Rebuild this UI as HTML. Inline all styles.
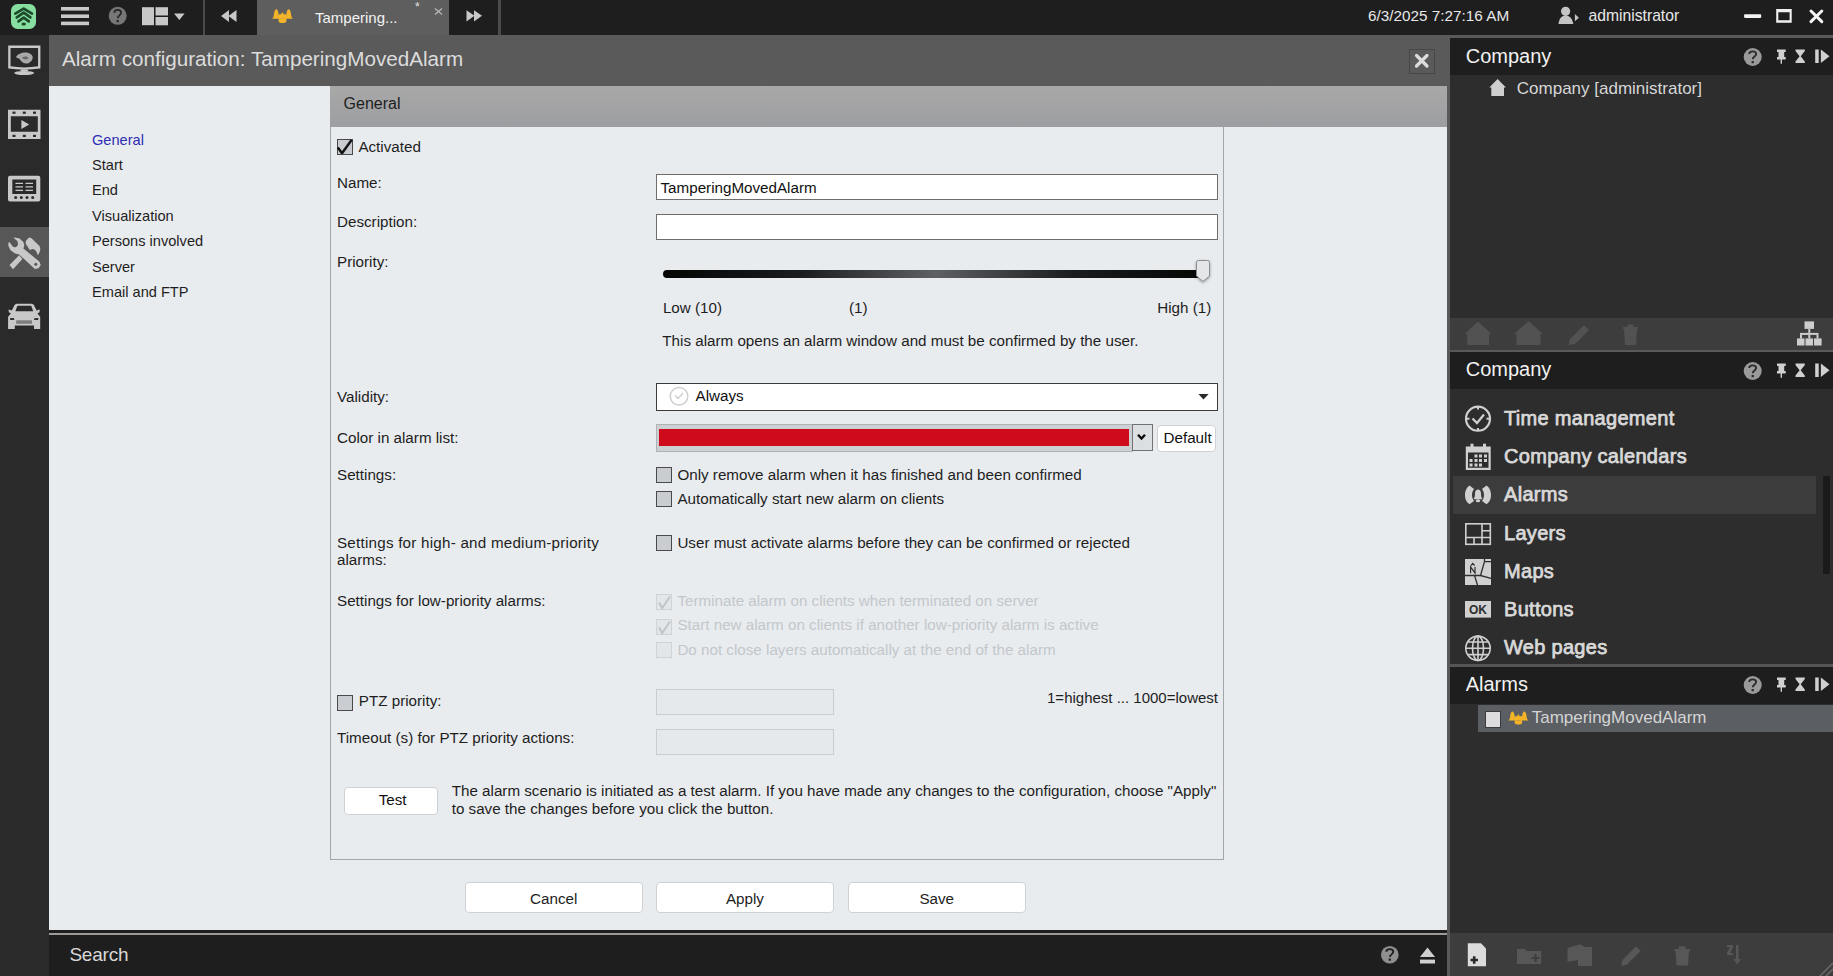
<!DOCTYPE html>
<html><head><meta charset="utf-8">
<style>
*{box-sizing:border-box;margin:0;padding:0}
html,body{width:1833px;height:976px;overflow:hidden;background:#2d2d2d;font-family:"Liberation Sans",sans-serif}
.a{position:absolute}
.t{position:absolute;white-space:nowrap;line-height:1}
#top{left:0;top:0;width:1833px;height:35px;background:#1e1e1e}
#side{left:0;top:35px;width:49px;height:941px;background:#2a2a2a}
#dtitle{left:49px;top:35px;width:1401px;height:895px;background:#5a5a5a}
#content{left:49px;top:86px;width:1398px;height:844px;background:#e9ecef}
#sep{left:49px;top:930px;width:1401px;height:5px;background:#1e1e1e;border-bottom:2px solid #9a9a9a}
#search{left:49px;top:935px;width:1401px;height:41px;background:#1e1e1e}
#rp{left:1450px;top:38px;width:383px;height:938px;background:#2d2d2d}
.f{font-size:15px;color:#1e1e1e}
.cb{position:absolute;width:16px;height:16px;border:1px solid #4a4a4a;background:#c9ccd0}
.cbd{position:absolute;width:16px;height:16px;border:1px solid #cfd3d7;background:#e3e6e9}
.tb{position:absolute;background:#fff;border:1px solid #6e6e6e}
.btn{position:absolute;background:#fff;border:1px solid #cfd2d5;border-radius:4px;font-size:15.2px;color:#1e1e1e;text-align:center}
.rh{position:absolute;left:0;width:386px;background:#1e1e1e}
.ri{font-size:20px;color:#e6e6e6;font-weight:700}
</style></head><body>
<div id="top" class="a"></div>
<div id="side" class="a"></div>
<div id="dtitle" class="a"></div>
<div id="content" class="a"></div>
<div id="sep" class="a"></div>
<div id="search" class="a"></div>
<div id="rp" class="a"></div>

<svg width="0" height="0" style="position:absolute"><defs>
<g id="bell" fill="#f4b42a">
 <path d="M0 9.8 C1.3 8.8 1.8 7 2 5 C2.3 2 3.3 0.3 4.3 0.3 C5.3 0.3 6.3 2 6.6 5 C6.8 7 7.3 8.8 8.6 9.8 Z"/>
 <path d="M12.4 9.8 C13.7 8.8 14.2 7 14.4 5 C14.7 2 15.7 0.3 16.7 0.3 C17.7 0.3 18.7 2 19 5 C19.2 7 19.7 8.8 21 9.8 Z"/>
 <path d="M6.8 9.8 L6.8 5.2 L9.3 5.2 C9.6 4 10 3.5 10.5 3.5 C11 3.5 11.4 4 11.7 5.2 L14.2 5.2 L14.2 9.8 Z"/>
 <path d="M6.6 9.6 L14.4 9.6 L14.4 11.3 Q14.4 14 12 14 L9 14 Q6.6 14 6.6 11.3 Z"/>
</g>
</defs></svg>



<!-- RIGHT PANEL -->
<div class="a" style="left:1450px;top:38px;width:383px;height:37px;background:#1e1e1e"></div>
<div class="a" style="left:1450px;top:318px;width:383px;height:32px;background:#3d3d3d;border-bottom:2px solid #5a5a5a;height:34px"></div>
<div class="a" style="left:1450px;top:352px;width:383px;height:37px;background:#1e1e1e"></div>
<div class="a" style="left:1453px;top:476px;width:363px;height:38px;background:#3c3c3c"></div>
<div class="a" style="left:1823px;top:476px;width:7px;height:98px;background:#1a1a1a"></div>
<div class="a" style="left:1450px;top:664px;width:383px;height:3px;background:#555"></div>
<div class="a" style="left:1450px;top:667px;width:383px;height:37px;background:#1e1e1e"></div>
<div class="a" style="left:1478px;top:704.7px;width:355px;height:27.7px;background:#5b5e63"></div>
<div class="a" style="left:1484.5px;top:711px;width:16px;height:16.5px;background:#dcdcde;border:1.5px solid #3a3c40"></div>
<div class="a" style="left:1450px;top:933px;width:383px;height:43px;background:#3d3d3d"></div>
<div class="a" style="left:1447px;top:86px;width:3px;height:890px;background:#595959"></div>
<div class="t" style="left:1465.7px;top:45.7px;font-size:20px;color:#f2f2f2;">Company</div>
<div class="t" style="left:1516.8px;top:79.5px;font-size:17px;color:#d6d6d6;">Company [administrator]</div>
<div class="t" style="left:1465.7px;top:359.1px;font-size:20px;color:#f2f2f2;">Company</div>
<div class="t" style="left:1504px;top:407.8px;font-size:20px;color:#d9d9d9;-webkit-text-stroke:0.75px #d9d9d9;letter-spacing:0.3px;">Time management</div>
<div class="t" style="left:1504px;top:445.9px;font-size:20px;color:#d9d9d9;-webkit-text-stroke:0.75px #d9d9d9;letter-spacing:0.3px;">Company calendars</div>
<div class="t" style="left:1504px;top:483.8px;font-size:20px;color:#d9d9d9;-webkit-text-stroke:0.75px #d9d9d9;letter-spacing:0.3px;">Alarms</div>
<div class="t" style="left:1504px;top:522.6px;font-size:20px;color:#d9d9d9;-webkit-text-stroke:0.75px #d9d9d9;letter-spacing:0.3px;">Layers</div>
<div class="t" style="left:1504px;top:561.0px;font-size:20px;color:#d9d9d9;-webkit-text-stroke:0.75px #d9d9d9;letter-spacing:0.3px;">Maps</div>
<div class="t" style="left:1504px;top:598.7px;font-size:20px;color:#d9d9d9;-webkit-text-stroke:0.75px #d9d9d9;letter-spacing:0.3px;">Buttons</div>
<div class="t" style="left:1504px;top:637.1px;font-size:20px;color:#d9d9d9;-webkit-text-stroke:0.75px #d9d9d9;letter-spacing:0.3px;">Web pages</div>
<div class="t" style="left:1465.7px;top:673.7px;font-size:20px;color:#f2f2f2;">Alarms</div>
<div class="t" style="left:1531.7px;top:709.0px;font-size:17px;color:#d4d4d4;">TamperingMovedAlarm</div>
<div class="t" style="left:69.4px;top:945.4px;font-size:19px;color:#d8d8d8;letter-spacing:-0.2px;">Search</div>
<svg class="a" style="left:0;top:0" width="1833" height="976">
<g transform="translate(0,0)">
  <circle cx="1752.7" cy="57" r="9" fill="#9a9a9a"/>
  <path d="M1749.2 54 C1749.2 50.5 1756.2 50.5 1756.2 54 C1756.2 56.3 1752.7 56.8 1752.7 59.3" fill="none" stroke="#2a2a2a" stroke-width="1.8"/>
  <rect x="1751.6" y="61" width="2.2" height="2.2" fill="#2a2a2a"/>
  <path fill="#d0d0d0" d="M1777 49.5 L1785.7 49.5 L1785.7 52 L1784.2 52 L1784.2 57 L1785.7 57 L1785.7 59.5 L1782 59.5 L1782 63.8 L1780.6 63.8 L1780.6 59.5 L1777 59.5 L1777 57 L1778.5 57 L1778.5 52 L1777 52 Z"/>
  <path fill="#d0d0d0" d="M1795.5 49.5 L1804.8 49.5 L1804.8 51 L1800.7 56.3 L1804.8 61.5 L1804.8 63 L1795.5 63 L1795.5 61.5 L1799.6 56.3 L1795.5 51 Z"/>
  <rect x="1815.2" y="49.5" width="3.5" height="13.5" fill="#d0d0d0"/>
  <path d="M1820.9 49.5 L1829.5 56.3 L1820.9 63 Z" fill="#d0d0d0"/>
</g><g transform="translate(0,314)">
  <circle cx="1752.7" cy="57" r="9" fill="#9a9a9a"/>
  <path d="M1749.2 54 C1749.2 50.5 1756.2 50.5 1756.2 54 C1756.2 56.3 1752.7 56.8 1752.7 59.3" fill="none" stroke="#2a2a2a" stroke-width="1.8"/>
  <rect x="1751.6" y="61" width="2.2" height="2.2" fill="#2a2a2a"/>
  <path fill="#d0d0d0" d="M1777 49.5 L1785.7 49.5 L1785.7 52 L1784.2 52 L1784.2 57 L1785.7 57 L1785.7 59.5 L1782 59.5 L1782 63.8 L1780.6 63.8 L1780.6 59.5 L1777 59.5 L1777 57 L1778.5 57 L1778.5 52 L1777 52 Z"/>
  <path fill="#d0d0d0" d="M1795.5 49.5 L1804.8 49.5 L1804.8 51 L1800.7 56.3 L1804.8 61.5 L1804.8 63 L1795.5 63 L1795.5 61.5 L1799.6 56.3 L1795.5 51 Z"/>
  <rect x="1815.2" y="49.5" width="3.5" height="13.5" fill="#d0d0d0"/>
  <path d="M1820.9 49.5 L1829.5 56.3 L1820.9 63 Z" fill="#d0d0d0"/>
</g><g transform="translate(0,628)">
  <circle cx="1752.7" cy="57" r="9" fill="#9a9a9a"/>
  <path d="M1749.2 54 C1749.2 50.5 1756.2 50.5 1756.2 54 C1756.2 56.3 1752.7 56.8 1752.7 59.3" fill="none" stroke="#2a2a2a" stroke-width="1.8"/>
  <rect x="1751.6" y="61" width="2.2" height="2.2" fill="#2a2a2a"/>
  <path fill="#d0d0d0" d="M1777 49.5 L1785.7 49.5 L1785.7 52 L1784.2 52 L1784.2 57 L1785.7 57 L1785.7 59.5 L1782 59.5 L1782 63.8 L1780.6 63.8 L1780.6 59.5 L1777 59.5 L1777 57 L1778.5 57 L1778.5 52 L1777 52 Z"/>
  <path fill="#d0d0d0" d="M1795.5 49.5 L1804.8 49.5 L1804.8 51 L1800.7 56.3 L1804.8 61.5 L1804.8 63 L1795.5 63 L1795.5 61.5 L1799.6 56.3 L1795.5 51 Z"/>
  <rect x="1815.2" y="49.5" width="3.5" height="13.5" fill="#d0d0d0"/>
  <path d="M1820.9 49.5 L1829.5 56.3 L1820.9 63 Z" fill="#d0d0d0"/>
</g>
<!-- house tree icon -->
<path d="M1489.3 87.5 L1497.6 79 L1506 87.5 L1504 87.5 L1504 96 L1491.3 96 L1491.3 87.5 Z" fill="#cfcfcf"/>
<!-- toolbar dim icons -->
<g fill="#525252">
 <path d="M1464.7 334 L1478 321.5 L1491.5 334 L1489 334 L1489 345 L1467.2 345 L1467.2 334 Z"/>
 <path d="M1514 334 L1528.5 321 L1543 334 L1540.5 334 L1540.5 345 L1516.5 345 L1516.5 334 Z"/>
 <path d="M1568.6 345 L1570 339 L1584 325 L1589 330 L1575 344 Z"/>
 <path d="M1623 327 L1638 327 L1638 329 L1637 329 L1636 345 L1625 345 L1624 329 L1623 329 Z M1627.5 324.5 L1633.5 324.5 L1633.5 327 L1627.5 327 Z"/>
</g>
<g fill="#cdcdcd">
 <rect x="1804.5" y="321.4" width="9.5" height="7.5"/>
 <rect x="1808.3" y="328.9" width="2" height="4"/>
 <rect x="1800" y="332.9" width="18.5" height="2"/>
 <rect x="1800" y="334.9" width="2" height="3.5"/><rect x="1808.3" y="334.9" width="2" height="3.5"/><rect x="1816.5" y="334.9" width="2" height="3.5"/>
 <rect x="1797" y="338.4" width="7.5" height="7.1"/><rect x="1805.5" y="338.4" width="7.5" height="7.1"/><rect x="1814" y="338.4" width="7.6" height="7.1"/>
</g>
<!-- list icons -->
<g fill="none" stroke="#d0d0d0" stroke-width="2.2">
 <circle cx="1478" cy="418.7" r="12"/>
 <path d="M1472.5 418.5 L1477 423 L1484 414.5"/>
</g>
<g fill="#d0d0d0">
 <rect x="1477" y="407" width="2" height="2.5"/><rect x="1477" y="428" width="2" height="2.5"/><rect x="1467" y="417.7" width="2.5" height="2"/><rect x="1486.5" y="417.7" width="2.5" height="2"/>
 <path fill-rule="evenodd" d="M1465.8 446.5 L1490.7 446.5 L1490.7 470 L1465.8 470 Z M1468 452.5 L1488.5 452.5 L1488.5 467.8 L1468 467.8 Z"/>
 <rect x="1470.5" y="443.7" width="3" height="5"/><rect x="1483" y="443.7" width="3" height="5"/>
 <rect x="1474.5" y="454.5" width="3" height="3"/><rect x="1479" y="454.5" width="3" height="3"/><rect x="1484" y="454.5" width="3" height="3"/>
 <rect x="1469.5" y="459" width="3" height="3"/><rect x="1474.5" y="459" width="3" height="3"/><rect x="1479" y="459" width="3" height="3"/><rect x="1484" y="459" width="3" height="3"/>
 <rect x="1469.5" y="463.5" width="3" height="3"/><rect x="1474.5" y="463.5" width="3" height="3"/><rect x="1479" y="463.5" width="3" height="3"/>
 <!-- alarms icon -->
 <path d="M1469.5 485.6 C1466 488 1465 492 1465 495 C1465 498 1466 502 1469.5 504.3 L1474 501 C1472.5 499 1472 497 1472 495 C1472 493 1472.5 491 1474 489 Z"/>
 <path d="M1486.5 485.6 C1490 488 1491 492 1491 495 C1491 498 1490 502 1486.5 504.3 L1482 501 C1483.5 499 1484 497 1484 495 C1484 493 1483.5 491 1482 489 Z"/>
 <path d="M1473.5 499.2 C1475 497.5 1475 495 1475 493.5 C1475 491 1476.5 489.6 1478 489.6 C1479.5 489.6 1481 491 1481 493.5 C1481 495 1481 497.5 1482.5 499.2 Z"/>
 <ellipse cx="1478" cy="500.8" rx="2.2" ry="1.5"/>
 <!-- maps -->
 <rect x="1465" y="559" width="26" height="26"/>
 <!-- OK -->
 <rect x="1465" y="601" width="26" height="16.6"/>
 <!-- new doc -->
 <path d="M1467.8 943.2 L1481 943.2 L1486 948.5 L1486 966.3 L1467.8 966.3 Z" fill="#dcdcdc"/>
</g>
<g fill="none" stroke="#d0d0d0" stroke-width="1.6">
 <rect x="1465.8" y="523.8" width="24.5" height="20.5"/>
 <path d="M1482 523.8 L1482 544.3 M1465.8 537.5 L1490.3 537.5 M1482 530.7 L1490.3 530.7 M1474 537.5 L1474 544.3"/>
 <circle cx="1478" cy="648.3" r="12.2"/>
 <ellipse cx="1478" cy="648.3" rx="5.5" ry="12.2"/>
 <path d="M1478 636 L1478 660.5 M1466 648.3 L1490 648.3 M1467.5 642 L1488.5 642 M1467.5 654.6 L1488.5 654.6"/>
</g>
<g fill="none" stroke="#2d2d2d" stroke-width="1.3">
 <path d="M1484.5 559 L1484.5 561.6 L1491 561.6 M1484.5 561.6 L1480.5 575.5 M1465 575.5 L1480.5 575.5 L1491 578.3 M1474.5 575.5 L1477.5 585"/>
 <path d="M1470.6 573.2 L1470.6 567 L1475 573.2 L1475 567" stroke-width="1.2"/>
 <path d="M1470.9 565.6 L1472.8 563.4 L1474.7 565.6" stroke-width="1.1"/>
</g>
<text x="1478" y="614" font-family="Liberation Sans" font-size="12" font-weight="700" fill="#2d2d2d" text-anchor="middle">OK</text>
<use href="#bell" x="0" y="0" transform="translate(1508.3,711.3) scale(0.96,0.95)"/>
<!-- bottom toolbar -->
<path d="M1470.5 960 L1478 960 M1474.2 956.3 L1474.2 963.7" stroke="#2a2a2a" stroke-width="2.6"/>
<g fill="#575757">
 <path d="M1517 949 L1525 949 L1527 951 L1541.2 951 L1541.2 964 L1517 964 Z"/>
 <path d="M1567.5 948 L1580 944.3 L1585 947 L1592 947 L1592 966 L1578 966 L1578 960 L1567.5 962 Z"/>
 <path d="M1621 966 L1622.5 960 L1636 946.3 L1640.6 951 L1627 964.6 Z"/>
 <path d="M1674.6 949 L1690 949 L1690 951 L1689 951 L1688 965.5 L1676.5 965.5 L1675.5 951 L1674.6 951 Z M1679 946.3 L1685.5 946.3 L1685.5 949 L1679 949 Z"/>
 <path d="M1727 945 L1733 945 L1733 947 L1730 953 L1733 953 L1733 955 L1727 955 L1727 953 L1730 947 L1727 947 Z M1736 945 L1738.5 945 L1738.5 959 L1741 959 L1737.2 964.5 L1733.5 959 L1736 959 Z"/>
</g>
<path d="M1535.5 954 L1535.5 962 M1531.5 958 L1539.5 958" stroke="#3d3d3d" stroke-width="2"/>
<path d="M1820 976 L1833 963 M1826 976 L1833 969" stroke="#6a6a6a" stroke-width="1.5"/>
<!-- search bar icons -->
<circle cx="1389.8" cy="954.7" r="8.8" fill="#8f8f8f"/>
<path d="M1386.3 951.8 C1386.3 948.3 1393.3 948.3 1393.3 951.8 C1393.3 954.1 1389.8 954.6 1389.8 957" fill="none" stroke="#1e1e1e" stroke-width="1.8"/>
<rect x="1388.7" y="958.5" width="2.2" height="2.2" fill="#1e1e1e"/>
<path d="M1420 957 L1427.5 947.5 L1435 957 Z" fill="#d0d0d0"/>
<rect x="1420" y="959.6" width="15" height="3.9" fill="#d0d0d0"/>
</svg>
<!-- FORM -->
<div class="a" style="left:330px;top:86px;width:1117px;height:41px;background:linear-gradient(#a8a8a8,#9d9ea1)"></div>
<div class="a" style="left:330px;top:127px;width:894px;height:733px;border:1px solid #a3a6a9;border-top:none"></div>
<div class="t" style="left:343.6px;top:96.3px;font-size:16px;color:#1e1e1e;">General</div>
<div class="t" style="left:92px;top:132.6px;font-size:14.6px;color:#2d2db4;">General</div>
<div class="t" style="left:92px;top:157.8px;font-size:14.6px;color:#1e1e1e;">Start</div>
<div class="t" style="left:92px;top:183.3px;font-size:14.6px;color:#1e1e1e;">End</div>
<div class="t" style="left:92px;top:208.6px;font-size:14.6px;color:#1e1e1e;">Visualization</div>
<div class="t" style="left:92px;top:234.1px;font-size:14.6px;color:#1e1e1e;">Persons involved</div>
<div class="t" style="left:92px;top:259.6px;font-size:14.6px;color:#1e1e1e;">Server</div>
<div class="t" style="left:92px;top:285.1px;font-size:14.6px;color:#1e1e1e;">Email and FTP</div>
<div class="cb" style="left:336.6px;top:139.2px;width:16.3px;height:16.3px;border-color:#474747;border-width:1.3px"></div>
<svg class="a" style="left:336px;top:138px" width="18" height="18"><path d="M1.8 9.5 L6 15.3 L15.6 1.9" fill="none" stroke="#151515" stroke-width="2.5" stroke-linejoin="bevel"/></svg>
<div class="t" style="left:358.4px;top:139.1px;font-size:15.2px;color:#1e1e1e;">Activated</div>
<div class="t" style="left:337px;top:174.8px;font-size:15.2px;color:#1e1e1e;">Name:</div>
<div class="tb" style="left:656px;top:173.5px;width:562px;height:26.5px"></div>
<div class="t" style="left:660.5px;top:179.5px;font-size:15.2px;color:#111;">TamperingMovedAlarm</div>
<div class="t" style="left:337px;top:213.8px;font-size:15.2px;color:#1e1e1e;">Description:</div>
<div class="tb" style="left:656px;top:213.5px;width:562px;height:26.5px"></div>
<div class="t" style="left:337px;top:253.5px;font-size:15.2px;color:#1e1e1e;">Priority:</div>
<div class="a" style="left:663px;top:270.3px;width:546px;height:7.7px;border-radius:4px;background:linear-gradient(90deg,#050505 0%,#1a1c1e 25%,#5e6063 50%,#1a1c1e 75%,#050505 100%)"></div>
<svg class="a" style="left:1194px;top:259px;filter:drop-shadow(0 1.5px 1.5px rgba(0,0,0,0.35))" width="18" height="26"><path d="M2.5 3.5 Q2.5 1.5 4.5 1.5 L13.5 1.5 Q15.5 1.5 15.5 3.5 L15.5 17 L9 22.5 L2.5 17 Z" fill="#e4e6e8" stroke="#8a8c8e" stroke-width="1"/></svg>
<div class="t" style="left:662.9px;top:299.9px;font-size:15.2px;color:#1e1e1e;">Low (10)</div>
<div class="t" style="left:849px;top:299.9px;font-size:15.2px;color:#1e1e1e;">(1)</div>
<div class="t" style="left:1157.2px;top:299.9px;font-size:15.2px;color:#1e1e1e;">High (1)</div>
<div class="t" style="left:662.3px;top:332.5px;font-size:15.2px;color:#1e1e1e;">This alarm opens an alarm window and must be confirmed by the user.</div>
<div class="t" style="left:337px;top:388.6px;font-size:15.2px;color:#1e1e1e;">Validity:</div>
<div class="tb" style="left:656px;top:383px;width:561.5px;height:28px;border-color:#3c3c3c"></div>
<svg class="a" style="left:668px;top:385px" width="22" height="22"><circle cx="11" cy="11.2" r="8.8" fill="none" stroke="#cfcfcf" stroke-width="1.5"/><path d="M7 10.5 L10 13.5 L15 8" fill="none" stroke="#cfcfcf" stroke-width="1.5"/></svg>
<div class="t" style="left:695.5px;top:387.9px;font-size:15.2px;color:#111;">Always</div>
<svg class="a" style="left:1196px;top:392px" width="14" height="10"><path d="M2.4 1.9 L12.6 1.9 L7.5 7.6 Z" fill="#2a2a2a"/></svg>
<div class="t" style="left:337px;top:429.6px;font-size:15.2px;color:#1e1e1e;">Color in alarm list:</div>
<div class="a" style="left:656px;top:424px;width:477px;height:27.6px;background:#cdd0d3;border:1px solid #b0b3b6"></div>
<div class="a" style="left:659px;top:428.7px;width:470px;height:17.6px;background:#cf0a1d"></div>
<div class="a" style="left:1132.4px;top:424px;width:21px;height:27.4px;background:#dcdfe2;border:1px solid #707274"></div>
<svg class="a" style="left:1136px;top:432px" width="14" height="11"><path d="M2 2.8 L5.5 6.5 L9 2.8" fill="none" stroke="#0a0a0a" stroke-width="2.4"/></svg>
<div class="btn" style="left:1157.4px;top:424.6px;width:59px;height:27.4px"></div>
<div class="t" style="left:1163.5px;top:429.7px;font-size:15.2px;color:#111;">Default</div>
<div class="t" style="left:337px;top:466.5px;font-size:15.2px;color:#1e1e1e;">Settings:</div>
<div class="cb" style="left:656px;top:467px"></div>
<div class="t" style="left:677.4px;top:467.1px;font-size:15.2px;color:#1e1e1e;">Only remove alarm when it has finished and been confirmed</div>
<div class="cb" style="left:656px;top:491.3px"></div>
<div class="t" style="left:677.4px;top:491.3px;font-size:15.2px;color:#1e1e1e;">Automatically start new alarm on clients</div>
<div class="t" style="left:337px;top:534.7px;font-size:15.2px;color:#1e1e1e;letter-spacing:0.23px">Settings for high- and medium-priority</div>
<div class="t" style="left:337px;top:551.9px;font-size:15.2px;color:#1e1e1e;">alarms:</div>
<div class="cb" style="left:656px;top:535px"></div>
<div class="t" style="left:677.4px;top:535.0px;font-size:15.2px;color:#1e1e1e;">User must activate alarms before they can be confirmed or rejected</div>
<div class="t" style="left:337px;top:592.7px;font-size:15.2px;color:#1e1e1e;">Settings for low-priority alarms:</div>
<div class="cbd" style="left:656px;top:594px"></div>
<svg class="a" style="left:656px;top:594px" width="17" height="17"><path d="M3 8.5 L6.2 14 L14 2.5" fill="none" stroke="#c0c4c8" stroke-width="2"/></svg>
<div class="t" style="left:677.4px;top:593.1px;font-size:15.2px;color:#c3c7cb;">Terminate alarm on clients when terminated on server</div>
<div class="cbd" style="left:656px;top:618.5px"></div>
<svg class="a" style="left:656px;top:618.5px" width="17" height="17"><path d="M3 8.5 L6.2 14 L14 2.5" fill="none" stroke="#c0c4c8" stroke-width="2"/></svg>
<div class="t" style="left:677.4px;top:617.4px;font-size:15.2px;color:#c3c7cb;">Start new alarm on clients if another low-priority alarm is active</div>
<div class="cbd" style="left:656px;top:642.3px"></div>
<div class="t" style="left:677.4px;top:641.7px;font-size:15.2px;color:#c3c7cb;">Do not close layers automatically at the end of the alarm</div>
<div class="cb" style="left:337px;top:694.6px"></div>
<div class="t" style="left:358.8px;top:693.4px;font-size:15.2px;color:#1e1e1e;">PTZ priority:</div>
<div class="a" style="left:656px;top:689.4px;width:178px;height:26px;background:#e6e9ec;border:1px solid #c9ccd0"></div>
<div class="t" style="left:1018px;top:689.8px;width:200px;text-align:right;font-size:15px;color:#1e1e1e">1=highest ... 1000=lowest</div>
<div class="t" style="left:337px;top:729.8px;font-size:15.2px;color:#1e1e1e;">Timeout (s) for PTZ priority actions:</div>
<div class="a" style="left:656px;top:729.2px;width:178px;height:26px;background:#e6e9ec;border:1px solid #c9ccd0"></div>
<div class="btn" style="left:343.6px;top:786.7px;width:94px;height:28px"></div>
<div class="t" style="left:378.7px;top:792.1px;font-size:15.2px;color:#111;">Test</div>
<div class="t" style="left:451.7px;top:783.4px;font-size:15.2px;color:#1e1e1e;">The alarm scenario is initiated as a test alarm. If you have made any changes to the configuration, choose "Apply"</div>
<div class="t" style="left:451.7px;top:801.1px;font-size:15.2px;color:#1e1e1e;">to save the changes before you click the button.</div>
<div class="btn" style="left:464.7px;top:882.3px;width:178px;height:30.7px;line-height:30px;padding-top:1px">Cancel</div>
<div class="btn" style="left:656.2px;top:882.3px;width:177.5px;height:30.7px;line-height:30px;padding-top:1px">Apply</div>
<div class="btn" style="left:847.7px;top:882.3px;width:178px;height:30.7px;line-height:30px;padding-top:1px">Save</div>
<!-- SIDEBAR -->
<div class="a" style="left:0;top:227px;width:49px;height:50px;background:#575757"></div>
<svg class="a" style="left:0;top:0" width="49" height="976">
 <g fill="#c8c8c8">
  <!-- monitor -->
  <path fill-rule="evenodd" d="M8.2 45.6 L40.4 45.6 L40.4 68.6 Q24.2 70.8 8.2 68.6 Z M10.5 48 L38.1 48 L38.1 66.3 Q24.2 68.5 10.5 66.3 Z"/>
  <path d="M21 69.5 L27.4 69.5 L28.5 71.5 L20 71.5 Z"/>
  <ellipse cx="24.2" cy="73" rx="10" ry="2"/>
  <path d="M16 57 C18 53.5 24 51.8 28.5 53 C31 53.8 32.8 55.5 32.7 57.5 C32.5 61 29 63.8 26 63.6 C22.5 63.3 20 60 19.5 58.5 C18.5 58.3 17 58.5 16 57 Z" opacity="0.8"/>
  <path d="M22 58 C23.5 56 27 56 28.5 58 C27.5 59.5 24 60 22 58 Z" fill="#3a3a3a" opacity="0.6"/>
  <!-- film -->
  <path fill-rule="evenodd" d="M8 109.7 L40.5 109.7 L40.5 139 L8 139 Z M10.8 116.3 L37.8 116.3 L37.8 131.8 L10.8 131.8 Z"/>
  <path d="M21.4 120 L29.2 124.5 L21.4 129.1 Z"/>
  <!-- panel -->
  <path fill-rule="evenodd" d="M10 175.7 L38.3 175.7 Q40.3 175.7 40.3 177.7 L40.3 199.5 Q40.3 201.5 38.3 201.5 L10 201.5 Q8 201.5 8 199.5 L8 177.7 Q8 175.7 10 175.7 Z M12.3 179.4 L36.2 179.4 L36.2 194 L12.3 194 Z"/>
  <!-- tools -->
  <polygon points="9.5,265.1 19.2,255.3 22.4,259.0 13.0,269.3"/>
  <polygon points="26.6,239.9 29.1,237.4 31.2,237.9 39.5,246.1 40.4,249.4 39.3,253.1 37.7,255.3 36.5,251.7 34.9,249.7 32.6,249.0 29.8,249.9 25.7,243.8 25.8,241.3"/>
  <polygon points="13.7,237.4 19.2,238.3 23.4,242.0 24.3,245.7 23.4,248.4 39.5,261.8 40.7,265.0 38.6,268.3 34.9,269.0 19.2,254.4 15.1,253.5 10.5,250.3 8.4,246.1 8.4,242.7 9.3,242.1 13.2,247.1 16.0,247.2 18.1,244.8 17.5,241.3 13.8,238.1"/>
  <!-- car -->
  <path d="M16.8 303.8 L31.8 303.8 Q33.3 303.8 34 305.3 L36.6 310.6 L39.8 309.6 L39.5 312.3 L37.4 313.6 L40.2 316.8 L40.2 329.1 L34 329.1 L34 325.4 L14.8 325.4 L14.8 329.1 L8.1 329.1 L8.1 316.8 L10.9 313.6 L8.9 312.3 L8.5 309.6 L11.8 310.6 L14.4 305.3 Q15.2 303.8 16.8 303.8 Z"/>
 </g>
 <g fill="#2a2a2a">
  <circle cx="14.5" cy="112.7" r="0.01"/>
  <rect x="12.5" y="111.6" width="3" height="2.2"/><rect x="22.8" y="111.6" width="3" height="2.2"/><rect x="33" y="111.6" width="3" height="2.2"/>
  <rect x="12.5" y="134.8" width="3" height="2.2"/><rect x="22.8" y="134.8" width="3" height="2.2"/><rect x="33" y="134.8" width="3" height="2.2"/>
  <circle cx="15.7" cy="197.6" r="1.5"/><circle cx="21.3" cy="197.6" r="1.5"/><circle cx="27" cy="197.6" r="1.5"/><circle cx="32.7" cy="197.6" r="1.5"/>
  <path d="M15.4 311.2 L17.4 305.8 L31.2 305.8 L33.2 311.2 Z"/>
  <circle cx="35.8" cy="264.3" r="1.5" fill="#575757"/>
  <rect x="16.2" y="320.3" width="15.8" height="3.5" fill="#7d7d7d"/>
  <path d="M10 318 L14.2 318.3 L14.2 319.9 L10.3 320 Z M38.4 318 L34.2 318.3 L34.2 319.9 L38.1 320 Z"/>
 </g>
 <g stroke="#c8c8c8" stroke-width="1.3">
  <path d="M15.5 183.3 L23 183.3 M25.5 183.3 L33 183.3 M15.5 186.8 L23 186.8 M25.5 186.8 L33 186.8 M15.5 190.3 L23 190.3 M25.5 190.3 L33 190.3"/>
 </g>
</svg>
<!-- DIALOG TITLE -->
<div class="t" style="left:62px;top:48.8px;font-size:20.65px;color:#dcdcdc">Alarm configuration: TamperingMovedAlarm</div>
<div class="a" style="left:1409px;top:48.5px;width:25.5px;height:25.5px;border:1.5px solid #474747"></div>
<svg class="a" style="left:1409px;top:48px" width="26" height="26"><path d="M7.5 7.5 L18 18 M18 7.5 L7.5 18" stroke="#dcdcdc" stroke-width="3.2" stroke-linecap="round"/></svg>
<!-- TOP BAR -->
<svg class="a" style="left:0;top:0" width="1833" height="40">
  <rect x="11" y="4" width="25" height="25" rx="6.5" fill="#86dea0"/>
  <g fill="none" stroke="#1d4a2b" stroke-width="2.7" stroke-linecap="round" stroke-linejoin="round">
    <path d="M15.3 13.6 L23.7 8.7 L32 13.6"/>
    <path d="M16.8 17.4 L23.7 12.7 L30.4 17.4"/>
    <path d="M18.5 21.4 L23.7 17.6 L28.8 21.4"/>
  </g>
  <ellipse cx="23.7" cy="24" rx="2.3" ry="1.5" fill="#1d4a2b"/>
  <g fill="#c9c9c9">
    <rect x="61" y="7" width="28" height="3.6"/>
    <rect x="61" y="14.4" width="28" height="3.6"/>
    <rect x="61" y="21.6" width="28" height="3.6"/>
  </g>
  <circle cx="117.7" cy="15.8" r="9" fill="#777"/>
  <path d="M114.3 12.8 C114.3 9 121.1 9 121.1 12.8 C121.1 15.2 117.7 15.6 117.7 18.3" fill="none" stroke="#262626" stroke-width="1.7"/>
  <rect x="116.6" y="20" width="2.2" height="2.2" fill="#262626"/>
  <g fill="#c8c8c8">
    <rect x="142" y="7.2" width="12" height="18"/>
    <rect x="155.5" y="7.2" width="12.5" height="8.3"/>
    <rect x="155.5" y="17" width="12.5" height="8.3"/>
    <path d="M174 13.6 L184.6 13.6 L179.3 20 Z"/>
  </g>
  <rect x="203" y="0" width="2" height="35" fill="#4a4a4a"/>
  <g fill="#c8c8c8">
    <path d="M221 16 L229 10 L229 22 Z"/><path d="M228.5 16 L236.5 10 L236.5 22 Z"/>
  </g>
  <rect x="257" y="0" width="192" height="35" fill="#5e5e5e"/>
  <use href="#bell" x="272" y="9"/>
  <text x="415" y="11" font-family="Liberation Sans" font-size="12" fill="#e0e0e0">*</text>
  <path d="M435 8.5 L442 14.5 M442 8.5 L435 14.5" stroke="#b5b5b5" stroke-width="1.4"/>
  <rect x="498" y="0" width="3" height="35" fill="#4a4a4a"/>
  <g fill="#c8c8c8">
    <path d="M466.5 10.3 L474.5 15.85 L466.5 21.4 Z"/><path d="M474 10.3 L482 15.85 L474 21.4 Z"/>
  </g>
  <g fill="#c4c4c4">
    <circle cx="1565.6" cy="11.3" r="4.6"/>
    <path d="M1558.5 23.9 C1559 19.5 1561 15.5 1565.6 15.5 C1570.2 15.5 1572.5 19.5 1573.3 23.9 Z"/>
    <path d="M1574.9 14.1 L1578.9 17.7 L1574.9 21.3 Z"/>
  </g>
  <rect x="1744.1" y="14.2" width="17.1" height="3.7" rx="0.8" fill="#f4f4f4"/>
  <path fill-rule="evenodd" fill="#f0f0f0" d="M1776.2 9.1 L1791.7 9.1 L1791.7 22.7 L1776.2 22.7 Z M1778.3 12.3 L1789.6 12.3 L1789.6 20.3 L1778.3 20.3 Z"/>
  <path d="M1811 11 L1821.8 21.6 M1821.8 11 L1811 21.6" stroke="#f4f4f4" stroke-width="3" stroke-linecap="round"/>
  <rect x="1450" y="35" width="383" height="3" fill="#595959"/>
</svg>
<div class="t" style="left:315px;top:10.3px;font-size:15px;color:#f2f2f2">Tampering...</div>
<div class="t" style="left:1368px;top:8.2px;font-size:15.3px;color:#e8e8e8">6/3/2025 7:27:16 AM</div>
<div class="t" style="left:1588.5px;top:7.7px;font-size:15.7px;color:#e8e8e8">administrator</div>

</body></html>
